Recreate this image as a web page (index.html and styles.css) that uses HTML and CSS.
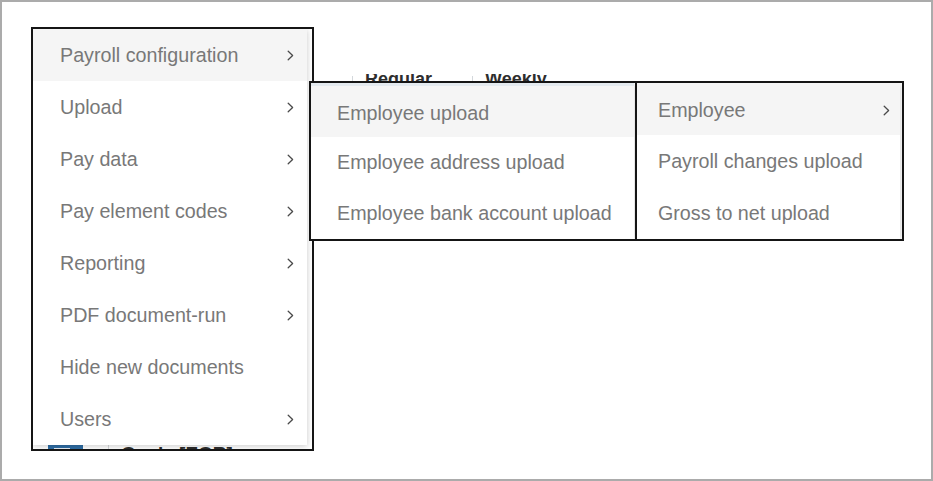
FILE: index.html
```html
<!DOCTYPE html>
<html lang="en">
<head>
<meta charset="utf-8">
<title>Payroll menu</title>
<link rel="stylesheet" href="styles.css">
</head>
<body>
<div class="frame">
  <div class="peek">
    <span class="peek-sep peek-sep-1"></span>
    <span class="peek-word peek-regular">Regular</span>
    <span class="peek-sep peek-sep-2"></span>
    <span class="peek-word peek-weekly">Weekly</span>
  </div>

  <div class="shot shot-main">
    <div class="bgrow">
      <span class="bg-btn"><span class="bg-btn-bar"></span></span>
      <span class="bg-line"></span>
      <span class="bg-text">Genie [EGR]</span>
    </div>
    <ul class="menu menu-main">
      <li class="item active"><span>Payroll configuration</span><svg class="chev" viewBox="0 0 7 11" width="7" height="11"><path d="M1.2 1.2 L5.6 5.5 L1.2 9.8"/></svg></li>
      <li class="item"><span>Upload</span><svg class="chev" viewBox="0 0 7 11" width="7" height="11"><path d="M1.2 1.2 L5.6 5.5 L1.2 9.8"/></svg></li>
      <li class="item"><span>Pay data</span><svg class="chev" viewBox="0 0 7 11" width="7" height="11"><path d="M1.2 1.2 L5.6 5.5 L1.2 9.8"/></svg></li>
      <li class="item"><span>Pay element codes</span><svg class="chev" viewBox="0 0 7 11" width="7" height="11"><path d="M1.2 1.2 L5.6 5.5 L1.2 9.8"/></svg></li>
      <li class="item"><span>Reporting</span><svg class="chev" viewBox="0 0 7 11" width="7" height="11"><path d="M1.2 1.2 L5.6 5.5 L1.2 9.8"/></svg></li>
      <li class="item"><span>PDF document-run</span><svg class="chev" viewBox="0 0 7 11" width="7" height="11"><path d="M1.2 1.2 L5.6 5.5 L1.2 9.8"/></svg></li>
      <li class="item"><span>Hide new documents</span></li>
      <li class="item"><span>Users</span><svg class="chev" viewBox="0 0 7 11" width="7" height="11"><path d="M1.2 1.2 L5.6 5.5 L1.2 9.8"/></svg></li>
    </ul>
  </div>

  <div class="shot shot-upload">
    <ul class="menu menu-upload">
      <li class="item active"><span>Employee upload</span></li>
      <li class="item"><span>Employee address upload</span></li>
      <li class="item"><span>Employee bank account upload</span></li>
    </ul>
  </div>

  <div class="shot shot-employee">
    <ul class="menu menu-employee">
      <li class="item active"><span>Employee</span><svg class="chev" viewBox="0 0 7 11" width="7" height="11"><path d="M1.2 1.2 L5.6 5.5 L1.2 9.8"/></svg></li>
      <li class="item"><span>Payroll changes upload</span></li>
      <li class="item"><span>Gross to net upload</span></li>
    </ul>
  </div>
</div>
</body>
</html>
```

FILE: styles.css
```css
* { box-sizing: border-box; }

html, body {
  margin: 0;
  padding: 0;
  background: #ffffff;
}

.frame {
  position: relative;
  width: 933px;
  height: 481px;
  background: #ffffff;
  box-shadow: inset 0 0 0 2px #ababab;
  overflow: hidden;
  font-family: "Liberation Sans", Arial, Helvetica, sans-serif;
}

/* background app peeking above the upload submenu */
.peek {
  position: absolute;
  left: 340px;
  top: 74px;
  width: 240px;
  height: 7px;
  overflow: hidden;
}
.peek-word {
  position: absolute;
  top: -4px;
  font-size: 18px;
  line-height: 18px;
  font-weight: bold;
  color: #2e2e2e;
}
.peek-regular { left: 25px; }
.peek-weekly { left: 145px; }
.peek-sep {
  position: absolute;
  top: 2px;
  width: 1px;
  height: 10px;
  background: #d4d8dc;
}
.peek-sep-1 { left: 12px; }
.peek-sep-2 { left: 132px; }

/* outlined screenshot crops */
.shot {
  position: absolute;
  border: 2px solid #151515;
  overflow: hidden;
  background: #ffffff;
}
.shot-main {
  left: 31px;
  top: 27px;
  width: 283px;
  height: 424px;
}
.shot-upload {
  left: 309px;
  top: 81px;
  width: 328px;
  height: 160px;
}
.shot-employee {
  left: 635px;
  top: 81px;
  width: 269px;
  height: 160px;
}

/* app row visible below the main menu */
.bgrow {
  position: absolute;
  left: 0;
  top: 413px;
  width: 280px;
  height: 30px;
}
.bg-btn {
  position: absolute;
  left: 15px;
  top: 3px;
  width: 35px;
  height: 26px;
  background: #2f6ea5;
}
.bg-btn-bar {
  position: absolute;
  left: 6px;
  top: 3px;
  width: 16px;
  height: 2px;
  background: #e8eef4;
}
.bg-line {
  position: absolute;
  left: 75px;
  top: 0;
  width: 1px;
  height: 30px;
  background: #d8dadc;
}
.bg-text {
  position: absolute;
  left: 88px;
  top: 2px;
  font-size: 19px;
  line-height: 19px;
  font-weight: bold;
  color: #2e2e2e;
}

/* menus */
.menu {
  position: relative;
  list-style: none;
  margin: 0;
  padding: 0;
  background: #ffffff;
  box-shadow: 0 1px 6px rgba(0, 0, 0, 0.22);
}
.menu-main { width: 274px; }
.menu-upload {
  width: 323px;
  border-top: 3px solid #e4eaef;
}
.menu-employee { width: 263px; }

.item {
  display: flex;
  align-items: center;
  justify-content: space-between;
  height: 52px;
  font-size: 19.7px;
  color: #787878;
  white-space: nowrap;
}
.item.active { background: #f5f5f5; }

.menu-main .item { padding: 0 13px 0 27px; }
.menu-upload .item { height: 51px; padding: 0 12px 0 26px; }
.menu-upload .item:first-child { padding-top: 3px; }
.menu-employee .item { padding: 0 10px 0 21px; }
.menu-employee .item:first-child { padding-top: 2px; }

.chev {
  flex: none;
  fill: none;
  stroke: #4a4a4a;
  stroke-width: 1.3;
  stroke-linecap: round;
  stroke-linejoin: round;
}
```
